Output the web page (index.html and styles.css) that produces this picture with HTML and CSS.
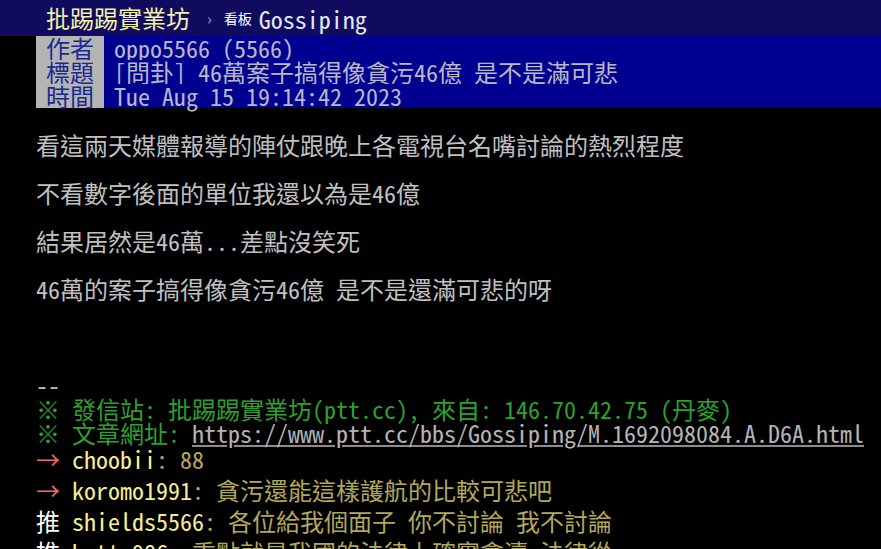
FILE: index.html
```html
<!DOCTYPE html>
<html lang="zh-Hant">
<head>
<meta charset="utf-8">
<title>[問卦] 46萬案子搞得像貪污46億 是不是滿可悲 - 看板 Gossiping - 批踢踢實業坊</title>
<link rel="stylesheet" href="styles.css">
</head>
<body>
<div class="topbar">
  <a class="brand">批踢踢實業坊</a>
  <span class="sep">›</span>
  <span class="board-label">看板</span>
  <a class="board">Gossiping</a>
</div>
<div class="main">
  <div class="meta">
    <div class="meta-line"><span class="meta-tag">作者</span><span class="meta-value">oppo5566 (5566)</span></div>
    <div class="meta-line"><span class="meta-tag">標題</span><span class="meta-value">[問卦] 46萬案子搞得像貪污46億 是不是滿可悲</span></div>
    <div class="meta-line"><span class="meta-tag">時間</span><span class="meta-value">Tue Aug 15 19:14:42 2023</span></div>
  </div>
  <div class="content">看這兩天媒體報導的陣仗跟晚上各電視台名嘴討論的熱烈程度

不看數字後面的單位我還以為是46億

結果居然是46萬...差點沒笑死

46萬的案子搞得像貪污46億 是不是還滿可悲的呀



--
<span class="f2">※ 發信站: 批踢踢實業坊(ptt.cc), 來自: 146.70.42.75 (丹麥)</span>
<span class="f2">※ 文章網址: </span><a class="link">https://www.ptt.cc/bbs/Gossiping/M.1692098084.A.D6A.html</a></div>
  <div class="pushes">
    <div class="push"><span class="push-tag arrow">→ </span><span class="push-userid">choobii</span><span class="push-content">: 88</span></div>
    <div class="push"><span class="push-tag arrow">→ </span><span class="push-userid">koromo1991</span><span class="push-content">: 貪污還能這樣護航的比較可悲吧</span></div>
    <div class="push"><span class="push-tag up">推 </span><span class="push-userid">shields5566</span><span class="push-content">: 各位給我個面子 你不討論 我不討論</span></div>
    <div class="push"><span class="push-tag up">推 </span><span class="push-userid">hutta986</span><span class="push-content">: 重點就是我國的法律上確實貪瀆 法律從</span></div>
  </div>
</div>
</body>
</html>
```

FILE: styles.css
```css
html, body {
  margin: 0;
  padding: 0;
  background: #000;
}

body {
  font-family: "Noto Sans Mono CJK TC", "Noto Sans CJK TC", monospace;
  font-size: 24px;
  color: #c0c0c0;
  overflow: hidden;
}

.topbar {
  height: 36px;
  background: #100b5e;
  display: flex;
  align-items: center;
  padding-left: 46px;
  white-space: nowrap;
}

.brand {
  color: #f4f2a6;
  font-size: 24px;
  line-height: 36px;
}

.sep {
  color: #9a9ab8;
  font-size: 16px;
  margin-left: 17px;
  margin-right: 12px;
}

.board-label {
  color: #ffffff;
  font-size: 14px;
  margin-right: 7px;
}

.board {
  color: #e6e6f2;
  font-size: 24px;
}

.meta-line {
  display: flex;
  height: 24px;
  line-height: 24px;
  white-space: pre;
}

.meta-tag {
  margin-left: 36px;
  padding: 0 10px;
  background: #b4b4b4;
  color: #1a2a90;
}

.meta-value {
  flex: 1;
  padding-left: 10px;
  background: #000090;
  color: #b8b8c8;
}

.content {
  padding: 25px 0 0 36px;
  line-height: 24px;
  white-space: pre;
}

.f2 {
  color: #2ea02e;
}

.link {
  color: #b4b4b4;
  text-decoration: underline;
  text-decoration-color: #8c8c8c;
}

.pushes {
  padding-left: 36px;
  margin-top: -2px;
}

.push {
  height: 31px;
  line-height: 31px;
  white-space: pre;
}

.push-tag.arrow {
  color: #f06868;
}

.push-tag.up {
  color: #ffffff;
}

.push-userid {
  color: #f4ee90;
}

.push-content {
  color: #b2a85a;
}
```
